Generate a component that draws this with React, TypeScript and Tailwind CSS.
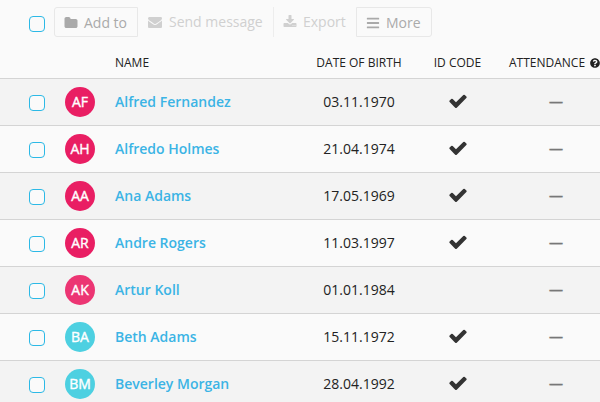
import clsx from 'clsx'
import { FaBars, FaQuestionCircle } from 'react-icons/fa'

const people = [
	{ initials: 'AF', name: 'Alfred Fernandez', born: '03.11.1970', hasId: true, color: 'bg-[#e91e63]' },
	{ initials: 'AH', name: 'Alfredo Holmes', born: '21.04.1974', hasId: true, color: 'bg-[#e91e63]' },
	{ initials: 'AA', name: 'Ana Adams', born: '17.05.1969', hasId: true, color: 'bg-[#e91e63]' },
	{ initials: 'AR', name: 'Andre Rogers', born: '11.03.1997', hasId: true, color: 'bg-[#e91e63]' },
	{ initials: 'AK', name: 'Artur Koll', born: '01.01.1984', hasId: false, color: 'bg-[#ec3573]' },
	{ initials: 'BA', name: 'Beth Adams', born: '15.11.1972', hasId: true, color: 'bg-[#4dd0e1]' },
	{ initials: 'BM', name: 'Beverley Morgan', born: '28.04.1992', hasId: true, color: 'bg-[#4dd0e1]' },
]

const columns = 'grid grid-cols-[65px_50px_187px_114px_83px_1fr]'

function Checkbox({ className }: { className?: string }) {
	return (
		<button
			role="checkbox"
			aria-checked="false"
			aria-label="Select"
			className={clsx('ml-[29px] block size-4 rounded-[4px] border border-[#2cb9e6] bg-[#fafafa]', className)}
		/>
	)
}

function FolderIcon() {
	return (
		<svg viewBox="0 0 1792 1792" className="size-3.5 fill-current">
			<path d="M1728 608v704q0 92-66 158t-158 66H288q-92 0-158-66t-66-158V352q0-92 66-158t158-66h320q92 0 158 66t66 158v32h672q92 0 158 66t66 158z" />
		</svg>
	)
}

function CheckIcon() {
	return (
		<svg viewBox="0 0 1792 1792" className="size-5 fill-[#333]">
			<path d="M1671 566q0 40-28 68l-724 724-136 136q-28 28-68 28t-68-28l-136-136-362-362q-28-28-28-68t28-68l136-136q28-28 68-28t68 28l294 295 656-657q28-28 68-28t68 28l136 136q28 28 28 68z" />
		</svg>
	)
}

function EnvelopeIcon() {
	return (
		<svg viewBox="0 0 1792 1792" className="size-3.5 fill-current">
			<path d="M1792 710v794q0 66-47 113t-113 47H160q-66 0-113-47T0 1504V710q44 49 101 87 362 246 497 345 57 42 92.500 65.500t94.500 48 110 24.500h2q51 0 110-24.500t94.500-48 92.500-65.500q170-123 498-345 57-39 100-87zm0-294q0 79-49 151t-122 123q-376 261-468 325-10 7-42.500 30.500t-54 38-52 32.500-57.500 27-50 9h-2q-23 0-50-9t-57.500-27-52-32.500-54-38T639 1015q-91-64-262-182.500T172 690q-62-42-117-115.500T0 438q0-78 41.500-130T160 256h1472q65 0 112.500 47t47.500 113z" />
		</svg>
	)
}

function DownloadIcon() {
	return (
		<svg viewBox="0 0 1792 1792" className="size-3.5 fill-current">
			<path d="M1344 1344q0-26-19-45t-45-19-45 19-19 45 19 45 45 19 45-19 19-45zm256 0q0-26-19-45t-45-19-45 19-19 45 19 45 45 19 45-19 19-45zm128-224v320q0 40-28 68t-68 28H160q-40 0-68-28t-28-68v-320q0-40 28-68t68-28h465l135 136q58 56 136 56t136-56l136-136h464q40 0 68 28t28 68zm-325-569q17 41-14 70l-448 448q-18 19-45 19t-45-19L403 621q-31-29-14-70 17-39 59-39h256V64q0-26 19-45t45-19h256q26 0 45 19t19 45v448h256q42 0 59 39z" />
		</svg>
	)
}

export default function App() {
	return (
		<div className="h-[402px] w-[600px] overflow-hidden bg-[#fafafa] font-['Open_Sans',sans-serif] text-sm text-[#222]">
			<div className="flex h-[46px] pt-[7px]">
				<Checkbox className="mt-[9px]" />
				<div className="ml-[9px] flex h-[30px] text-[#aaa]">
					<button className="flex w-[84px] items-center gap-1.5 rounded-l-[3px] border border-[#e8e8e8] pt-0.5 pl-[9px]">
						<FolderIcon />
						Add to
					</button>
					<button className="flex w-[135px] items-center gap-[7px] pl-[10px] text-[#d0d0d0]">
						<EnvelopeIcon />
						Send message
					</button>
					<button className="flex w-[83px] items-center gap-1.5 border-l border-[#ededed] pl-[9px] text-[#d0d0d0]">
						<DownloadIcon />
						Export
					</button>
					<button className="flex w-[76px] items-center gap-1.5 rounded-r-[3px] border border-[#e8e8e8] pt-0.5 pl-[9px]">
						<FaBars className="size-3.5" />
						More
					</button>
				</div>
			</div>
			<div className={clsx(columns, 'h-8 items-center pt-0.5 text-xs whitespace-nowrap')}>
				<span className="col-start-3">NAME</span>
				<span className="text-center">DATE OF BIRTH</span>
				<span className="text-center">ID CODE</span>
				<span className="flex items-center gap-[5px] pl-2.5">
					ATTENDANCE
					<FaQuestionCircle className="size-2.5 shrink-0" />
				</span>
			</div>
			{people.map((person) => (
				<div
					key={person.name}
					className={clsx(columns, 'h-[47px] items-center border-t border-[#d4d4d4] odd:bg-[#f3f3f3] even:bg-[#fafafa]')}
				>
					<Checkbox className="mt-0.5" />
					<span
						className={clsx(
							'-mt-px flex size-[30px] items-center justify-center rounded-full text-sm text-white [-webkit-text-stroke:0.4px_white]',
							person.color,
						)}
					>
						{person.initials}
					</span>
					<a href="#" className="font-semibold text-[#3bb4e5]">
						{person.name}
					</a>
					<span className="text-center">{person.born}</span>
					<span className="-mt-0.5 flex justify-center">{person.hasId && <CheckIcon />}</span>
					<span className="pl-[50px] text-[#777] [-webkit-text-stroke:0.4px_#777]">—</span>
				</div>
			))}
		</div>
	)
}
